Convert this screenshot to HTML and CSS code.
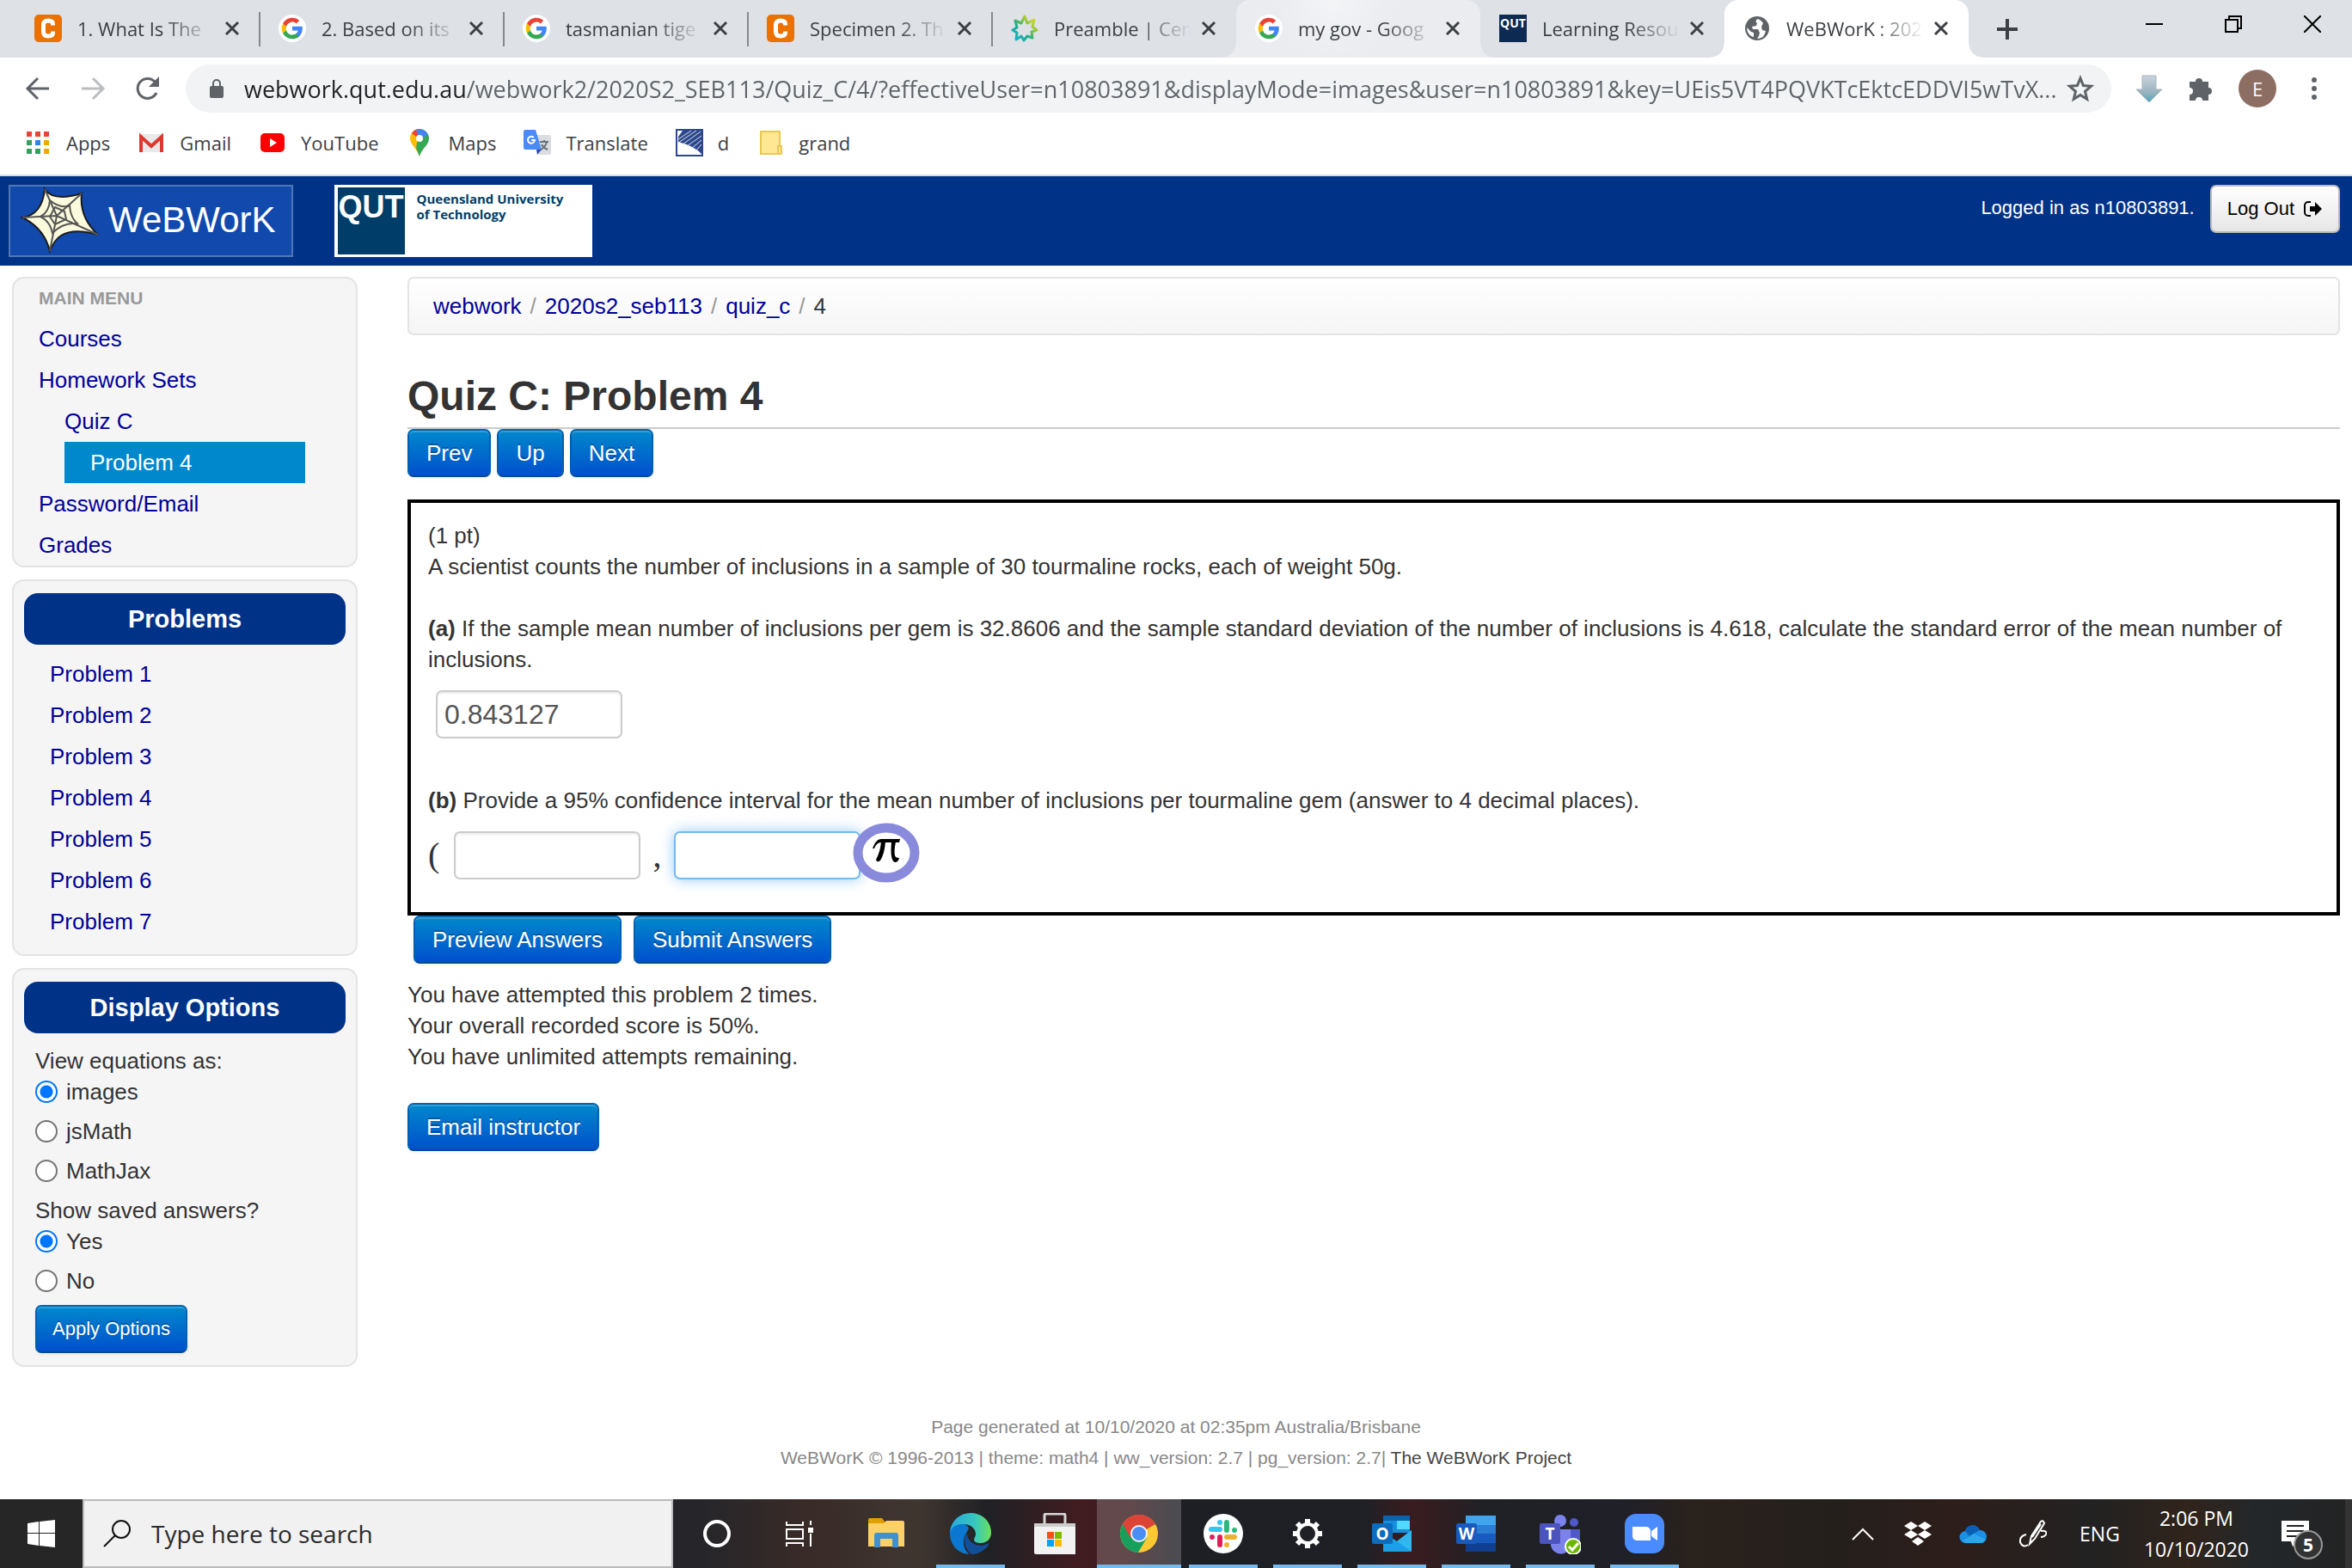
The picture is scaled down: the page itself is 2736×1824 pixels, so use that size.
FILE: index.html
```html
<!DOCTYPE html>
<html lang="en">

<head>
    <meta charset="UTF-8" />
    <title>WeBWorK : 2020S2_SEB113 : Quiz_C : 4</title>
    <link rel="stylesheet" href="styles.css">
</head>

<body>
    <!-- shared icons -->
    <svg class="sprite" width="0" height="0">
        <symbol id="google" viewBox="0 0 32 32">
            <circle cx="16" cy="16" r="16" fill="#fff" />
            <path fill="#4285f4" d="M27.800 16.300c0-.9-.1-1.700-.2-2.500H16v4.700h6.600c-.3 1.500-1.100 2.800-2.400 3.700v3h3.900c2.300-2.100 3.700-5.200 3.700-8.900z" />
            <path fill="#34a853" d="M16 28.300c3.300 0 6-1.100 8.100-2.900l-3.900-3.100c-1.100.7-2.500 1.200-4.200 1.200-3.200 0-5.900-2.200-6.900-5.100H5.100v3.200c2 4 6.100 6.700 10.900 6.700z" />
            <path fill="#fbbc05" d="M9.100 18.400a7.200 7.200 0 0 1 0-4.700v-3.200H5.100a12 12 0 0 0 0 11.100z" />
            <path fill="#ea4335" d="M16 8.600c1.800 0 3.400.6 4.700 1.800l3.500-3.500C22 4.900 19.200 3.700 16 3.700c-4.800 0-8.900 2.700-10.900 6.800l4 3.200c1-2.900 3.700-5.100 6.900-5.100z" />
        </symbol>
        <symbol id="chegg" viewBox="0 0 32 32">
            <rect width="32" height="32" rx="5" fill="#eb7100" />
            <path d="M21.500 12.500V11q0-4-5.500-4t-5.500 5v8q0 5 5.500 5t5.500-4v-1.500" fill="none" stroke="#fff" stroke-width="5" />
        </symbol>
        <symbol id="close" viewBox="0 0 16 16">
            <path d="M1 1l14 14M15 1L1 15" stroke="#3c4043" stroke-width="3" fill="none" />
        </symbol>
    </svg>

    <div class="tabs">
        <div class="tab">
            <svg class="favicon"><use href="#chegg" /></svg>
            <span class="title">1. What Is The</span>
            <button class="close" aria-label="Close tab"><svg><use href="#close" /></svg></button>
        </div>
        <div class="tab line">
            <svg class="favicon"><use href="#google" /></svg>
            <span class="title">2. Based on its</span>
            <button class="close" aria-label="Close tab"><svg><use href="#close" /></svg></button>
        </div>
        <div class="tab line">
            <svg class="favicon"><use href="#google" /></svg>
            <span class="title">tasmanian tige</span>
            <button class="close" aria-label="Close tab"><svg><use href="#close" /></svg></button>
        </div>
        <div class="tab line">
            <svg class="favicon"><use href="#chegg" /></svg>
            <span class="title">Specimen 2. Th</span>
            <button class="close" aria-label="Close tab"><svg><use href="#close" /></svg></button>
        </div>
        <div class="tab line">
            <svg class="favicon" viewBox="0 0 32 32">
                <defs><linearGradient id="burst" x1="1" y1="0" x2="0" y2="1"><stop offset="0" stop-color="#f7e017" /><stop offset=".35" stop-color="#8cc63f" /><stop offset=".6" stop-color="#1fae8a" /><stop offset="1" stop-color="#15b6d6" /></linearGradient></defs>
                <path d="M16 2l3 8 8-4-2 8 5 4-6 2 1 7-6-2-4 5-3-5-6 4 1-8-5-3 5-3-2-8 7 3z" fill="none" stroke="url(#burst)" stroke-width="3" stroke-linejoin="round" />
            </svg>
            <span class="title">Preamble | Cen</span>
            <button class="close" aria-label="Close tab"><svg><use href="#close" /></svg></button>
        </div>
        <div class="tab hovered">
            <svg class="favicon"><use href="#google" /></svg>
            <span class="title">my gov - Goog</span>
            <button class="close" aria-label="Close tab"><svg><use href="#close" /></svg></button>
        </div>
        <div class="tab">
            <svg class="favicon" viewBox="0 0 32 32">
                <rect width="32" height="32" fill="#0d2a52" />
                <text x="16" y="15" text-anchor="middle" class="qut-small">QUT</text>
            </svg>
            <span class="title">Learning Resou</span>
            <button class="close" aria-label="Close tab"><svg><use href="#close" /></svg></button>
        </div>
        <div class="tab current">
            <svg class="favicon" viewBox="0 0 32 32">
                <circle cx="16" cy="16" r="14" fill="#5f6368" />
                <path fill="#fff" d="M17 5c-3 1-3 4-1 5l-1 3-5 1 1 3h6l2 4-1 4-2 3c6 0 9-4 10-9l-4-1-1-4 2-4c-2-3-4-4-6-5zM4 15l5 5 3 1v5C7 25 4 20 4 15z" />
            </svg>
            <span class="title">WeBWorK : 202</span>
            <button class="close" aria-label="Close tab"><svg><use href="#close" /></svg></button>
        </div>
        <button class="new-tab" aria-label="New tab"><svg width="26" height="26" viewBox="0 0 26 26"><path d="M13 1v24M1 13h24" stroke="#3c4043" stroke-width="4" /></svg></button>
        <div class="window-buttons">
            <button aria-label="Minimize"><svg width="20" height="20" viewBox="0 0 20 20"><path d="M0 10h20" stroke="#000" stroke-width="2" /></svg></button>
            <button aria-label="Restore"><svg width="20" height="20" viewBox="0 0 20 20"><path d="M1 5h14v14H1zM5 5V1h14v14h-4" fill="none" stroke="#000" stroke-width="2" /></svg></button>
            <button aria-label="Close window"><svg width="20" height="20" viewBox="0 0 20 20"><path d="M0 0l20 20M20 0L0 20" stroke="#000" stroke-width="2" /></svg></button>
        </div>
    </div>

    <div class="toolbar">
        <div class="nav">
            <button aria-label="Back"><svg width="32" height="32" viewBox="0 0 32 32"><path d="M29 16H5M16 4L4 16l12 12" fill="none" stroke="#5f6368" stroke-width="3" /></svg></button>
            <button aria-label="Forward"><svg width="32" height="32" viewBox="0 0 32 32"><path d="M3 16h24M16 4l12 12-12 12" fill="none" stroke="#bbbdbf" stroke-width="3" /></svg></button>
            <button aria-label="Reload"><svg width="32" height="32" viewBox="0 0 32 32"><path d="M26 21A11.500 11.500 0 1 1 24.500 8.500" fill="none" stroke="#5f6368" stroke-width="3" /><path d="M29 2v12H17z" fill="#5f6368" /></svg></button>
        </div>
        <div class="address">
            <svg width="16" height="24" viewBox="0 0 16 24"><rect y="9" width="16" height="14" rx="2" fill="#5f6368" /><path d="M4 10V6a4 4 0 0 1 8 0v4" fill="none" stroke="#5f6368" stroke-width="2" /></svg>
            <input type="text" aria-label="Address" value="webwork.qut.edu.au/webwork2/2020S2_SEB113/Quiz_C/4/?effectiveUser=n10803891&amp;displayMode=images&amp;user=n10803891&amp;key=UEis5VT4PQVKTcEktcEDDVI5wTvX...">
            <svg width="32" height="32" viewBox="0 0 32 32"><path d="M16 4l3.500 8.500 9 .8-7 6 2.200 9L16 23.500l-7.700 4.800 2.200-9-7-6 9-.8z" fill="none" stroke="#5f6368" stroke-width="3" /></svg>
        </div>
        <svg width="32" height="32" viewBox="0 0 32 32"><defs><linearGradient id="arrow" x2="0" y2="1"><stop offset="0" stop-color="#c9d3dc" /><stop offset=".6" stop-color="#9db4bf" /><stop offset="1" stop-color="#4fa9b5" /></linearGradient></defs><path d="M8 1h16v16h7L16 32 1 17h7z" fill="url(#arrow)" stroke="#a9b4bd" /></svg>
        <svg width="32" height="32" viewBox="0 0 32 32"><path d="M3 8h7a4 4 0 1 1 8 0h7v7a4 4 0 1 1 0 8v7h-7a4 4 0 1 0-8 0H3v-7a4 4 0 1 0 0-8z" fill="#5f6368" /></svg>
        <span class="avatar">E</span>
        <svg width="32" height="32" viewBox="0 0 32 32"><g fill="#5f6368"><circle cx="16" cy="6" r="3" /><circle cx="16" cy="16" r="3" /><circle cx="16" cy="26" r="3" /></g></svg>
    </div>

    <div class="bookmarks">
        <a href="#">
            <svg viewBox="0 0 32 32"><path fill="#ea4335" d="M3 3h6v6H3zM13 3h6v6h-6zM23 3h6v6h-6z" /><path fill="#34a060" d="M3 13h6v6H3zM3 23h6v6H3zM13 23h6v6h-6z" /><path fill="#2a83f0" d="M13 13h6v6h-6z" /><path fill="#f0a800" d="M23 13h6v6h-6zM23 23h6v6h-6z" /></svg>
            Apps
        </a>
        <a href="#">
            <svg viewBox="0 0 32 32"><rect x="2" y="6" width="28" height="21" rx="2" fill="#e9e9e9" /><path d="M4 27V9l12 11L28 9v18" fill="none" stroke="#d93a30" stroke-width="4" /></svg>
            Gmail
        </a>
        <a href="#">
            <svg viewBox="0 0 32 32"><rect x="2" y="5" width="28" height="22" rx="5" fill="#f00" /><path d="M13 11l8 5-8 5z" fill="#fff" /></svg>
            YouTube
        </a>
        <a href="#">
            <svg viewBox="0 0 32 32"><path d="M16 0a11 11 0 0 0-11 11c0 7 8 12 11 21z" fill="#fbbc04" /><path d="M16 0a11 11 0 0 1 11 11c0 8-8 11-11 21l-4-10z" fill="#34a853" /><path d="M16 0A11 11 0 0 0 7 5l9 7z" fill="#ea4335" /><path d="M12 1a11 11 0 0 1 14 6l-10 5z" fill="#4285f4" /><circle cx="16" cy="11" r="4" fill="#fff" /></svg>
            Maps
        </a>
        <a href="#">
            <svg viewBox="0 0 32 32"><path d="M14 7h16a2 2 0 0 1 2 2v19a2 2 0 0 1-2 2H18z" fill="#dadce0" /><path d="M2 1h12l7 23H2a2 2 0 0 1-2-2V3a2 2 0 0 1 2-2z" fill="#4a8af4" /><path d="M15 24h6l-5 6z" fill="#3346b0" /><path d="M12 10a4 4 0 1 0 1 3h-4" stroke="#fff" stroke-width="2" fill="none" /><path d="M19 15h10M24 13v2M27 15q-2 7-7 9M21 18q2 4 7 6" stroke="#68727c" stroke-width="2" fill="none" /></svg>
            Translate
        </a>
        <a href="#">
            <svg viewBox="0 0 32 32"><rect x="1" y="1" width="30" height="30" fill="#fff" stroke="#2d478c" stroke-width="2" /><path d="M8 2h22v27Q22 20 3 15V9z" fill="#2d478c" /><path d="M3 12L18 2M3 16L24 2M8 18L29 3M13 20L30 8M18 23L30 13M23 26l7-8" stroke="#dbe3f3" stroke-width="1" /></svg>
            d
        </a>
        <a href="#">
            <svg viewBox="0 0 32 32"><path d="M5 3h22v26H5z" fill="#ffe794" stroke="#e8c84f" stroke-width="2" /><path d="M25 20h4v9h-4z" fill="#ffe794" stroke="#e8c84f" stroke-width="2" /></svg>
            grand
        </a>
    </div>

    <div class="masthead">
        <a class="webwork-logo" href="#">
            <svg width="92" height="78" viewBox="0 0 92 78">
                <path d="M28 3q10 15 43 5-3 28 19 48-28-8-43 1-8 5-13 18Q27 48 2 36q23-3 26-33z" fill="#fafadc" stroke="#1b1b1b" stroke-width="2" />
                <path d="M34 16q12 10 23 6 1 15 10 22-15-4-30 10-3-14-14-19 10-5 11-19zM40 24l11 5 2 9-13 6-6-9z" fill="none" stroke="#555" stroke-width="2" />
                <path d="M28 3l14 31L71 8M2 36l40-2 48 22M42 34l-8 41" fill="none" stroke="#555" stroke-width="2" />
            </svg>
            WeBWorK
        </a>
        <a class="qut-logo" href="#">
            <span class="qut-mark">QUT</span>
            <span class="qut-name">Queensland University<br>of Technology</span>
        </a>
        <div class="login">
            <span>Logged in as n10803891.</span>
            <button class="logout">Log Out <svg width="22" height="18" viewBox="0 0 22 18"><path d="M8 1H5a4 4 0 0 0-4 4v8a4 4 0 0 0 4 4h3" fill="none" stroke="#000" stroke-width="2" /><path d="M7 6h6V1l8 8-8 8v-5H7z" fill="#000" /></svg></button>
        </div>
    </div>

    <div class="page">
        <div class="sidebar">
            <div class="well menu">
                <h2>MAIN MENU</h2>
                <ul>
                    <li><a href="#">Courses</a></li>
                    <li><a href="#">Homework Sets</a>
                        <ul>
                            <li><a href="#">Quiz C</a></li>
                            <li class="active"><a href="#">Problem 4</a></li>
                        </ul>
                    </li>
                    <li><a href="#">Password/Email</a></li>
                    <li><a href="#">Grades</a></li>
                </ul>
            </div>

            <div class="well problems">
                <h3>Problems</h3>
                <ul>
                    <li><a href="#">Problem 1</a></li>
                    <li><a href="#">Problem 2</a></li>
                    <li><a href="#">Problem 3</a></li>
                    <li><a href="#">Problem 4</a></li>
                    <li><a href="#">Problem 5</a></li>
                    <li><a href="#">Problem 6</a></li>
                    <li><a href="#">Problem 7</a></li>
                </ul>
            </div>

            <form class="well options">
                <h3>Display Options</h3>
                <div class="fields">
                    <div>View equations as:</div>
                    <label><input type="radio" name="mode" checked>images</label>
                    <label><input type="radio" name="mode">jsMath</label>
                    <label><input type="radio" name="mode">MathJax</label>
                    <div>Show saved answers?</div>
                    <label><input type="radio" name="saved" checked>Yes</label>
                    <label><input type="radio" name="saved">No</label>
                    <button type="button" class="btn small">Apply Options</button>
                </div>
            </form>
        </div>

        <div class="content">
            <div class="breadcrumb">
                <a href="#">webwork</a><i>/</i><a href="#">2020s2_seb113</a><i>/</i><a href="#">quiz_c</a><i>/</i><span>4</span>
            </div>
            <h1>Quiz C: Problem 4</h1>
            <div class="pager">
                <button class="btn">Prev</button>
                <button class="btn">Up</button>
                <button class="btn">Next</button>
            </div>

            <div class="problem">
                <p>(1 pt)<br>A scientist counts the number of inclusions in a sample of 30 tourmaline rocks, each of weight 50g.</p>
                <p><b>(a)</b> If the sample mean number of inclusions per gem is 32.8606 and the sample standard deviation of the number of inclusions is 4.618, calculate the standard error of the mean number of inclusions.</p>
                <div class="answer-a">
                    <input class="answer" type="text" aria-label="Answer a" value="0.843127">
                </div>
                <p class="part-b"><b>(b)</b> Provide a 95% confidence interval for the mean number of inclusions per tourmaline gem (answer to 4 decimal places).</p>
                <div class="answer-b">
                    <span class="paren">(</span>
                    <input class="answer" type="text" aria-label="Lower bound">
                    <span class="comma">,</span>
                    <div class="editing">
                        <input class="answer focus" type="text" aria-label="Upper bound">
                        <button class="pi" aria-label="Equation editor">
                            <svg width="78" height="70" viewBox="0 0 78 70"><ellipse cx="39" cy="35" rx="33" ry="29" fill="#fff" stroke="#8a8adc" stroke-width="11" /><path d="M23 30q4-11 10-11h22l-1 4H34q-6-1-9 7z" /><path d="M33 22h5q-1 14-6 22-4 3-5-1 5-9 6-21zM45 22h5q-3 15 0 18 2 1 4 1-1 5-5 5-6-2-4-24z" /></svg>
                        </button>
                    </div>
                </div>
            </div>

            <div class="submit">
                <button class="btn">Preview Answers</button>
                <button class="btn">Submit Answers</button>
            </div>
            <p class="attempts">You have attempted this problem 2 times.<br>Your overall recorded score is 50%.<br>You have unlimited attempts remaining.</p>
            <button class="btn">Email instructor</button>
        </div>
    </div>

    <div class="footer">
        Page generated at 10/10/2020 at 02:35pm Australia/Brisbane<br>
        WeBWorK © 1996-2013 | theme: math4 | ww_version: 2.7 | pg_version: 2.7| <a href="#">The WeBWorK Project</a>
    </div>

    <div class="taskbar">
        <button class="start" aria-label="Start"><svg width="32" height="32" viewBox="0 0 32 32"><path fill="#fff" d="M0 4l13-2v13H0zM14 2l18-2v15H14zM0 16h13v14L0 28zM14 16h18v16l-18-2z" /></svg></button>
        <label class="search">
            <svg width="32" height="32" viewBox="0 0 32 32"><circle cx="21" cy="11" r="10" fill="none" stroke="#111" stroke-width="2" /><path d="M14 18L1 31" stroke="#111" stroke-width="2" /></svg>
            <input type="text" placeholder="Type here to search" aria-label="Type here to search">
        </label>
        <div class="apps">
            <button aria-label="Cortana"><svg viewBox="0 0 48 48"><circle cx="23" cy="24" r="14" fill="none" stroke="#fff" stroke-width="4" /></svg></button>
            <button aria-label="Task View"><svg viewBox="0 0 48 48"><path d="M6 10v4h19v-4M6 39v-4h19v4M6 19h19v11H6zM34 9v5M34 24v15" fill="none" stroke="#fff" stroke-width="2" /><rect x="31" y="17" width="6" height="6" fill="#fff" /></svg></button>
            <button aria-label="File Explorer"><svg viewBox="0 0 48 48"><path d="M3 8a2 2 0 0 1 2-2h14l4 5v8H3z" fill="#e09f00" /><path d="M3 12h18l3-3h19a2 2 0 0 1 2 2v28H3z" fill="#fdd166" /><path d="M10 40V26a3 3 0 0 1 3-3h22a3 3 0 0 1 3 3v14h-7V30H17v10z" fill="#3e92d3" /></svg></button>
            <button class="open" aria-label="Edge"><svg viewBox="0 0 48 48"><defs><linearGradient id="edge"><stop offset="0" stop-color="#2aa8e0" /><stop offset=".6" stop-color="#35c7c0" /><stop offset="1" stop-color="#6be05a" /></linearGradient></defs><path d="M24 0C10 0 0 11 0 24c3-8 9-11 16-11 9 0 14 6 14 12 0 2-2 4-2 6 0 3 4 4 8 4 7 0 12-5 12-12C48 9 37 0 24 0z" fill="url(#edge)" /><path d="M0 24c0 13 10 24 23 24C14 42 14 29 21 20c2-3-1-7-6-7C7 13 1 17 0 24z" fill="#0a78d0" /><path d="M21 20c-6 8-5 21 4 28 9 0 16-5 20-11 1-2-1-2-2-1-8 4-18 1-22-7-2-4-2-7 0-9z" fill="#134f98" /></svg></button>
            <button aria-label="Store"><svg viewBox="0 0 48 48"><path d="M12 13V3a2 2 0 0 1 2-2h20a2 2 0 0 1 2 2v10" fill="none" stroke="#d8d8d8" stroke-width="3" /><path d="M0 12h48v36H2a2 2 0 0 1-2-2z" fill="#f2f2f2" /><path d="M0 12h48v4H0z" fill="#ccc" /><path fill="#f25022" d="M15 22h8v8h-8z" /><path fill="#7fba00" d="M24 22h8v8h-8z" /><path fill="#00a4ef" d="M15 31h8v8h-8z" /><path fill="#ffb900" d="M24 31h8v8h-8z" /></svg></button>
            <button class="open front" aria-label="Chrome"><svg viewBox="0 0 48 48"><circle cx="24" cy="24" r="22" fill="#fcc934" /><path d="M24 24L5 13A22 22 0 0 1 43 13z" fill="#db4437" /><path d="M24 24L5 13a22 22 0 0 0 18 33l10-17z" fill="#189f5c" /><path d="M24 13h19A22 22 0 0 0 5 13l9 16z" fill="#db4437" /><circle cx="24" cy="24" r="10" fill="#f1f1f1" /><circle cx="24" cy="24" r="8" fill="#4b8cf5" /></svg></button>
            <button class="open" aria-label="Slack"><svg viewBox="0 0 48 48"><circle cx="24" cy="24" r="23" fill="#fff" /><g fill="none" stroke-width="6" stroke-linecap="round"><path d="M20 11v0M10 19h10" stroke="#36c5f0" /><path d="M37 20v0M28 11v9" stroke="#2eb67d" /><path d="M28 37v0M28 28h9" stroke="#ecb22e" /><path d="M11 28v0M20 28v9" stroke="#e01e5a" /></g></svg></button>
            <button class="open" aria-label="Settings"><svg viewBox="0 0 48 48"><circle cx="24" cy="24" r="11" fill="none" stroke="#fff" stroke-width="4" /><path d="M24 7v6M24 35v6M7 24h6M35 24h6M12 12l4 4M32 32l4 4M36 12l-4 4M16 32l-4 4" stroke="#fff" stroke-width="6" /></svg></button>
            <button class="open" aria-label="Outlook"><svg viewBox="0 0 48 48"><path d="M14 3h31v20H14z" fill="#1490df" /><path d="M14 3h31v6H14z" fill="#0a64ad" /><path d="M30 9h15v10H30z" fill="#50d9ff" /><path d="M14 22l16 11 17-13v23a2 2 0 0 1-2 2H14z" fill="#1a9fe8" /><path d="M30 33l17 12V20z" fill="#32b6f0" /><rect x="1" y="12" width="24" height="24" rx="2" fill="#0f6cbd" /><text x="13" y="31" text-anchor="middle" class="tile">O</text></svg></button>
            <button class="open" aria-label="Word"><svg viewBox="0 0 48 48"><path d="M12 3h35v11H12z" fill="#41a5ee" /><path d="M12 14h35v10H12z" fill="#2b7cd3" /><path d="M12 24h35v11H12z" fill="#185abd" /><path d="M12 35h35v10H12z" fill="#103f91" /><rect x="1" y="12" width="24" height="24" rx="2" fill="#185abd" /><text x="13" y="31" text-anchor="middle" class="tile">W</text></svg></button>
            <button class="open" aria-label="Teams"><svg viewBox="0 0 48 48"><circle cx="24" cy="9" r="7" fill="#7b83eb" /><circle cx="40" cy="11" r="5" fill="#5059c9" /><path d="M30 19h17v14a9 9 0 0 1-17 3z" fill="#5059c9" /><path d="M13 19h23v16a11 11 0 0 1-23 2z" fill="#7b83eb" /><rect y="12" width="24" height="24" rx="2" fill="#4b53bc" /><text x="12" y="31" text-anchor="middle" class="tile">T</text><circle cx="39" cy="39" r="9" fill="#6bb700" stroke="#fff" stroke-width="2" /><path d="M34 39l4 4 7-8" stroke="#fff" stroke-width="3" fill="none" /></svg></button>
            <button class="open" aria-label="Zoom"><svg viewBox="0 0 48 48"><rect x="1" y="1" width="46" height="46" rx="13" fill="#4a8cff" /><path d="M10 16h16a5 5 0 0 1 5 5v11H15a5 5 0 0 1-5-5zM32 21l7-5v16l-7-5z" fill="#fff" /></svg></button>
        </div>
        <div class="tray">
            <div class="tray-icons">
                <svg width="32" height="32" viewBox="0 0 32 32"><path d="M4 23l12-12 12 12" fill="none" stroke="#fff" stroke-width="2" /></svg>
                <svg width="32" height="32" viewBox="0 0 32 32"><path fill="#fff" d="M8 2l8 5-8 5-8-5zM24 2l8 5-8 5-8-5zM8 12l8 5-8 5-8-5zM24 12l8 5-8 5-8-5zM16 20l7 5-7 5-7-5z" /></svg>
                <svg width="32" height="32" viewBox="0 0 32 32"><path d="M8 27a7 7 0 0 1-1-14A9 9 0 0 1 24 12a7 7 0 0 1 1 15z" fill="#1c8fe3" /><path d="M7 13a9 9 0 0 1 17-1L12 19z" fill="#0a5fb4" /><path d="M3 25l14-9 14 7q-2 4-6 4H8z" fill="#28a8ea" /></svg>
            </div>
            <svg width="32" height="32" viewBox="0 0 32 32"><path d="M12 28l2-9L25 2q3-2 4 2L18 22zM15 20l10-15M8 17q-8 2-7 9 3 7 9 3M25 13q8-1 6 4-2 3-6 3" fill="none" stroke="#fff" stroke-width="2" /></svg>
            <span>ENG</span>
            <div class="clock">2:06 PM<br>10/10/2020</div>
            <div class="notify">
                <svg width="32" height="32" viewBox="0 0 32 32"><path d="M0 1h32v24H20l-7 6-2-6H0z" fill="#fff" /><path d="M6 7h20M6 13h20M6 19h20" stroke="#222" stroke-width="2" /></svg>
                <span class="badge">5</span>
            </div>
        </div>
    </div>
</body>

</html>
```
FILE: styles.css
```css
* {
    box-sizing: border-box;
}

body {
    margin: 0;
    min-height: 100vh;
    display: flex;
    flex-direction: column;
    background-color: white;
    color: #333;
    font-family: "Liberation Sans", Arial, sans-serif;
    font-size: 26px;
    line-height: 36px;
}

a {
    color: #000099;
    text-decoration: none;
}

button {
    margin: 0;
    padding: 0;
    border: none;
    background: none;
    font-family: inherit;
    cursor: pointer;
}

svg {
    display: block;
    flex: none;
}

ul {
    list-style: none;
    margin: 0;
    padding: 0;
}

.sprite {
    position: absolute;
}

/* browser */
.tabs,
.toolbar,
.bookmarks,
.taskbar {
    font-family: "Open Sans", "Noto Sans", sans-serif;
}

.tabs {
    display: flex;
    align-items: stretch;
    height: 67px;
    padding-left: 18px;
    background-color: #dee1e6;
    font-size: 22px;
    color: #3c4043;
}

.tab {
    flex: 0 1 284px;
    min-width: 0;
    position: relative;
    display: flex;
    align-items: center;
    padding: 0 24px 2px 22px;
}

.line::before {
    content: "";
    position: absolute;
    left: -1px;
    top: 14px;
    width: 2px;
    height: 40px;
    background-color: #85888c;
}

.hovered {
    --foot: #ebecf0;
    background: radial-gradient(circle at 40% 0, #f3f4f6, #ebecf0 70px);
    border-radius: 16px 16px 0 0;
}

.current {
    --foot: white;
    background-color: white;
    border-radius: 16px 16px 0 0;
}

/* curved feet of the raised tabs */
.hovered::before,
.hovered::after,
.current::before,
.current::after {
    content: "";
    position: absolute;
    bottom: 0;
    width: 16px;
    height: 16px;
}

.hovered::before,
.current::before {
    left: -16px;
    background: radial-gradient(circle at 0 0, transparent 15px, var(--foot) 16px);
}

.hovered::after,
.current::after {
    right: -16px;
    background: radial-gradient(circle at 100% 0, transparent 15px, var(--foot) 16px);
}

.favicon {
    width: 32px;
    height: 32px;
}

.title {
    flex: 1;
    min-width: 0;
    margin: 0 12px 0 18px;
    white-space: nowrap;
    -webkit-mask-image: linear-gradient(to left, transparent, black 60px);
    mask-image: linear-gradient(to left, transparent, black 60px);
}

.close svg {
    width: 16px;
    height: 16px;
}

.new-tab {
    margin-left: 32px;
}

.window-buttons {
    margin-left: auto;
    display: flex;
    align-items: flex-start;
    gap: 72px;
    padding: 18px 36px 0 0;
}

.toolbar {
    display: flex;
    align-items: center;
    gap: 28px;
    height: 72px;
    padding: 0 28px;
}

.nav {
    display: flex;
    gap: 32px;
}

.address {
    flex: 1;
    display: flex;
    align-items: center;
    height: 56px;
    padding: 0 20px 0 28px;
    border-radius: 28px;
    background-color: #f1f3f4;
}

/* the host name is darker than the rest of the address */
.address input {
    flex: 1;
    min-width: 0;
    margin: 0 4px 0 24px;
    padding: 0;
    border: none;
    font-family: inherit;
    font-size: 27px;
    color: transparent;
    background: linear-gradient(to right, #202124 257px, #5f6368 257px);
    -webkit-background-clip: text;
    background-clip: text;
}

.avatar {
    width: 44px;
    height: 44px;
    border-radius: 50%;
    background-color: #8d6e63;
    color: white;
    font-size: 22px;
    line-height: 44px;
    text-align: center;
}

.bookmarks {
    display: flex;
    align-items: center;
    gap: 32px;
    height: 66px;
    padding: 0 28px 10px;
    border-bottom: 2px solid #dcdcdc;
    font-size: 22px;
}

.bookmarks a {
    display: flex;
    align-items: center;
    gap: 17px;
    color: #3c4043;
}

.bookmarks svg {
    width: 32px;
    height: 32px;
}

/* webwork */
.masthead {
    display: flex;
    align-items: flex-start;
    height: 104px;
    padding: 10px 14px 0 10px;
    background-color: #003388;
    color: white;
    font-size: 22px;
}

.webwork-logo {
    display: flex;
    align-items: center;
    gap: 10px;
    height: 84px;
    padding: 0 18px 2px 12px;
    border: 2px solid #4f77b4;
    background-color: #1149ad;
    color: white;
    font-size: 42px;
}

.qut-logo {
    display: flex;
    gap: 14px;
    width: 300px;
    height: 84px;
    margin-left: 48px;
    padding: 3px 4px;
    background-color: white;
    color: #003e69;
}

.qut-mark {
    width: 78px;
    background-color: #003e69;
    color: white;
    font-size: 36px;
    line-height: 46px;
    font-weight: bold;
    text-align: center;
}

.qut-name {
    padding-top: 4px;
    font-family: "Open Sans", sans-serif;
    font-size: 15px;
    line-height: 18px;
    font-weight: bold;
}

.qut-small {
    fill: white;
    font-size: 14px;
    font-weight: bold;
}

.login {
    margin-left: auto;
    display: flex;
    gap: 18px;
    line-height: 54px;
}

.logout {
    display: flex;
    align-items: center;
    gap: 11px;
    height: 56px;
    padding: 0 18px;
    border: 2px solid #bbb;
    border-radius: 7px;
    background: linear-gradient(white, #e6e6e6);
    color: black;
    font-size: 22px;
}

.page {
    display: flex;
    align-items: flex-start;
    gap: 58px;
    padding: 13px 14px 0;
}

.sidebar {
    flex: none;
    width: 402px;
    display: flex;
    flex-direction: column;
    gap: 14px;
}

.well {
    padding: 14px 12px;
    border: 2px solid #e3e3e3;
    border-radius: 14px;
    background-color: #f5f5f5;
}

.well li a {
    display: block;
    line-height: 48px;
}

.menu {
    padding: 0 59px 0 29px;
}

.menu h2 {
    margin: 0;
    color: #999;
    font-size: 21px;
    line-height: 46px;
}

.menu ul ul {
    padding-left: 30px;
}

.active {
    padding-left: 30px;
    background-color: #0088cc;
}

.active a {
    color: white;
}

.well h3 {
    margin: 0 0 10px;
    border-radius: 16px;
    background-color: #003388;
    color: white;
    font-size: 29px;
    line-height: 60px;
    text-align: center;
}

.problems ul {
    padding: 0 30px;
}

.fields {
    display: flex;
    flex-direction: column;
    align-items: flex-start;
    padding: 4px 13px 0;
}

.fields label {
    display: flex;
    align-items: center;
    gap: 10px;
    height: 36px;
    margin-bottom: 10px;
}

.fields input {
    appearance: none;
    width: 26px;
    height: 26px;
    margin: 0;
    border: 2px solid #767676;
    border-radius: 50%;
    background-color: white;
}

.fields input:checked {
    border-color: #0075ff;
    background: radial-gradient(circle, #0075ff 7px, white 8px);
}

.btn {
    padding: 8px 20px;
    border: 2px solid;
    border-color: #0066b3 #005fb0 #004a99;
    border-radius: 7px;
    background: linear-gradient(#0088cc, #0050cc);
    box-shadow: inset 0 2px 0 rgba(255, 255, 255, 0.2), 0 2px 4px rgba(0, 0, 0, 0.05);
    color: white;
    font-size: 26px;
    line-height: 36px;
    text-shadow: 0 -2px 0 rgba(0, 0, 0, 0.25);
}

.small {
    padding: 8px 18px;
    font-size: 22px;
}

.content {
    flex: 1;
    min-width: 0;
}

.breadcrumb {
    display: flex;
    gap: 10px;
    padding: 14px 28px;
    border: 2px solid #e3e3e3;
    border-radius: 7px;
    background: linear-gradient(white, #f5f5f5);
}

.breadcrumb i {
    color: #999;
    font-style: normal;
}

h1 {
    margin: 36px 0 0;
    padding-bottom: 1px;
    border-bottom: 2px solid #ccc;
    font-size: 48px;
    line-height: 70px;
}

.pager {
    display: flex;
    gap: 7px;
    margin-bottom: 26px;
}

.problem {
    padding: 20px 20px 38px;
    border: 4px solid black;
}

.problem p {
    margin: 0 0 36px;
}

.answer {
    width: 217px;
    height: 56px;
    padding: 0 8px;
    border: 2px solid #ccc;
    border-radius: 7px;
    background-color: white;
    box-shadow: inset 0 2px 2px rgba(0, 0, 0, 0.075);
    color: #555;
    font-family: inherit;
    font-size: 32px;
}

.answer-a {
    display: flex;
    margin-top: -18px;
    padding: 0 9px 54px;
}

.problem .part-b {
    margin-bottom: 18px;
}

.answer-b {
    display: flex;
    align-items: center;
}

.paren,
.comma {
    font-family: "Liberation Serif", serif;
    width: 30px;
    font-size: 40px;
}

.comma {
    width: 39px;
    text-align: center;
}

.editing {
    position: relative;
    display: flex;
}

.focus {
    border-color: #75b9f0;
    box-shadow: 0 0 16px rgba(82, 168, 236, 0.6);
}

.pi {
    position: absolute;
    left: 208px;
    top: -10px;
}

.submit {
    display: flex;
    gap: 14px;
    padding-left: 7px;
}

.attempts {
    margin: 18px 0 36px;
}

.footer {
    margin-top: auto;
    padding: 20px 0 30px;
    color: #888;
    font-size: 21px;
    text-align: center;
}

.footer a {
    color: #444;
}

/* taskbar */
.taskbar {
    display: flex;
    align-items: center;
    height: 80px;
    background: linear-gradient(to right, #262626 0, #26262a 30%, #382a27 34%, #403630 39%, #202125 42%, #411c20 46%, #3a1c20 48%, #1e1f25 50%, #1f2025 58%, #3a1c1f 60%, #202125 63%, #1f2028 69%, #2a221c 72%, #241f1c 78%, #2d1e1a 83%, #222 89%, #30241b 93%, #23272a 96%, #232323 100%);
    color: white;
    font-size: 23px;
}

.start {
    width: 96px;
    display: flex;
    justify-content: center;
}

.search {
    display: flex;
    align-items: center;
    gap: 24px;
    width: 687px;
    height: 80px;
    padding: 0 22px;
    border: 2px solid #bbb;
    background-color: #f1f1f1;
}

.search input {
    flex: 1;
    padding: 0;
    border: none;
    background: none;
    font-family: inherit;
    font-size: 28px;
}

.search input::placeholder {
    color: #2b2b2b;
}

.apps {
    display: flex;
    height: 80px;
    padding-left: 3px;
}

.apps button {
    display: flex;
    align-items: center;
    justify-content: center;
    width: 98px;
    background-repeat: no-repeat;
}

.apps svg {
    width: 48px;
    height: 48px;
}

.apps .open {
    background-image: linear-gradient(#76b9ed, #76b9ed);
    background-size: 80px 4px;
    background-position: bottom center;
}

.apps .front {
    background-color: rgba(255, 255, 255, 0.2);
    background-size: 98px 4px;
}

.tile {
    fill: white;
    font-size: 19px;
    font-weight: bold;
}

.tray {
    margin-left: auto;
    display: flex;
    align-items: center;
    height: 80px;
    gap: 38px;
    padding-right: 26px;
    border-right: 8px solid #343434;
}

.tray-icons {
    display: flex;
    gap: 32px;
}

.clock {
    text-align: center;
    margin-left: -10px;
}

.notify {
    position: relative;
    width: 48px;
}

.badge {
    position: absolute;
    left: 14px;
    top: 12px;
    width: 34px;
    height: 34px;
    border: 2px solid #999;
    border-radius: 50%;
    background-color: #333;
    font-size: 21px;
    line-height: 30px;
    font-weight: bold;
    text-align: center;
}
```
